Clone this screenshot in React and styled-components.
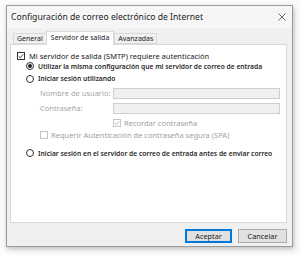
import React from "react";
import styled, { createGlobalStyle } from "styled-components";

const Global = createGlobalStyle`
  html, body { margin: 0; padding: 0; background: #fbfbfb; }
  body { width: 300px; height: 255px; overflow: hidden; font-family: "Noto Sans", "Open Sans", sans-serif; }
`;

const Window = styled.div`
  margin: 5px 0 0 6px;
  width: 287px;
  height: 242px;
  border: 1px solid #9a9a9a;
  background: #f0f0f0;
  box-shadow: 1px 2px 5px rgba(0,0,0,0.25);
  display: flex;
  flex-direction: column;
  box-sizing: border-box;
  font-size: 7.5px;
  color: #1a1a1a;
`;

const TitleBar = styled.div`
  height: 22px;
  background: #f6f6f6;
  display: flex;
  align-items: center;
  justify-content: space-between;
  padding: 0 6px 0 4px;
  font-size: 8.6px;
  color: #222;
`;

const Close = styled.svg`
  width: 8px;
  height: 8px;
`;

const Body = styled.div`
  flex: 1;
  display: flex;
  flex-direction: column;
  padding: 3px 5px 0 3px;
`;

const TabStrip = styled.div`
  display: flex;
  align-items: flex-end;
  height: 13px;
  padding-left: 3px;
  font-size: 7px;
`;

const Tab = styled.div`
  height: ${p => (p.$active ? "14px" : "11px")};
  box-sizing: border-box;
  padding: 0 ${p => (p.$active ? "4px" : "3px")} ${p => (p.$active ? "2px" : "0")};
  display: flex;
  align-items: center;
  border: 1px solid #d9d9d9;
  border-bottom: ${p => (p.$active ? "none" : "1px solid #d9d9d9")};
  background: ${p => (p.$active ? "#fff" : "#f0f0f0")};
  margin-right: ${p => (p.$active ? "0" : "-1px")};
  margin-bottom: ${p => (p.$active ? "-1px" : "0")};
  position: relative;
  z-index: ${p => (p.$active ? 1 : 0)};
`;

const Panel = styled.div`
  height: 179px;
  box-sizing: border-box;
  border: 1px solid #d9d9d9;
  background: #fff;
  padding: 6px 6px 0 6px;
  display: flex;
  flex-direction: column;
`;

const Row = styled.label`
  display: flex;
  align-items: center;
  white-space: nowrap;
  height: ${p => p.$h || 10}px;
  margin-top: ${p => p.$mt || 0}px;
  padding-left: ${p => p.$indent || 0}px;
  color: ${p => (p.$disabled ? "#a0a0a0" : p.$strong ? "#2a2a2a" : "#1a1a1a")};
  font-weight: ${p => (p.$strong ? 600 : 400)};
  font-size: ${p => (p.$strong ? "6.7px" : "7.5px")};
`;

const Box = styled.span`
  width: 6px;
  height: 6px;
  border: 1px solid ${p => (p.$disabled ? "#c4c4c4" : "#333")};
  background: #fff;
  margin-right: ${p => p.$gap || 3}px;
  display: inline-flex;
  align-items: center;
  justify-content: center;
  flex: none;
`;

const Radio = styled.span`
  width: 6px;
  height: 6px;
  border: 1px solid #333;
  border-radius: 50%;
  margin-right: 4px;
  display: inline-flex;
  align-items: center;
  justify-content: center;
  flex: none;
  &::after {
    content: "";
    display: ${p => (p.$on ? "block" : "none")};
    width: 4px;
    height: 4px;
    border-radius: 50%;
    background: #222;
  }
`;

const FieldRow = styled.div`
  display: flex;
  align-items: center;
  height: ${p => p.$h || 14}px;
  padding-left: 23px;
  color: #a6a6a6;
  white-space: nowrap;
`;

const FieldLabel = styled.span`
  width: 73px;
  flex: none;
`;

const Input = styled.div`
  width: 165px;
  height: 9px;
  border: 1px solid #cfcfcf;
  background: #f0f0f0;
`;

const Check = ({ color }) => (
  <svg width="6" height="6" viewBox="0 0 6 6">
    <path d="M0.7 3.1 L2.3 4.7 L5.3 1.1" fill="none" stroke={color} strokeWidth="0.9" />
  </svg>
);

const Footer = styled.div`
  flex: 1;
  display: flex;
  align-items: flex-start;
  justify-content: flex-end;
  gap: 6px;
  padding-top: 6px;
`;

const Button = styled.button`
  width: ${p => (p.$primary ? "47px" : "49px")};
  height: 14px;
  padding: 0;
  font-family: inherit;
  font-size: 7.3px;
  color: #1a1a1a;
  background: #e1e1e1;
  border: 1px solid ${p => (p.$primary ? "#0078d7" : "#adadad")};
  box-shadow: ${p => (p.$primary ? "inset 0 0 0 1px #0078d7" : "none")};
`;

export default function App() {
  return (
    <>
      <Global />
      <Window>
        <TitleBar>
          <span>Configuración de correo electrónico de Internet</span>
          <Close viewBox="0 0 8 8">
            <path d="M0.5 0.5 L7.5 7.5 M7.5 0.5 L0.5 7.5" stroke="#444" strokeWidth="0.8" />
          </Close>
        </TitleBar>
        <Body>
          <TabStrip>
            <Tab>General</Tab>
            <Tab $active>Servidor de salida</Tab>
            <Tab>Avanzadas</Tab>
          </TabStrip>
          <Panel>
            <Row>
              <Box $gap={4}><Check color="#333" /></Box>
              Mi servidor de salida (SMTP) requiere autenticación
            </Row>
            <Row $indent={9} $strong>
              <Radio $on />
              Utilizar la misma configuración que mi servidor de correo de entrada
            </Row>
            <Row $indent={9} $strong $h={15}>
              <Radio />
              Iniciar sesión utilizando
            </Row>
            <FieldRow>
              <FieldLabel>Nombre de usuario:</FieldLabel>
              <Input />
            </FieldRow>
            <FieldRow $h={16}>
              <FieldLabel>Contraseña:</FieldLabel>
              <Input />
            </FieldRow>
            <Row $indent={96} $disabled $h={13}>
              <Box $disabled><Check color="#b0b0b0" /></Box>
              Recordar contraseña
            </Row>
            <Row $indent={23} $disabled $h={11}>
              <Box $disabled />
              Requerir Autenticación de contraseña segura (SPA)
            </Row>
            <Row $indent={9} $strong $h={12} $mt={7}>
              <Radio />
              Iniciar sesión en el servidor de correo de entrada antes de enviar correo
            </Row>
          </Panel>
          <Footer>
            <Button $primary>Aceptar</Button>
            <Button>Cancelar</Button>
          </Footer>
        </Body>
      </Window>
    </>
  );
}
